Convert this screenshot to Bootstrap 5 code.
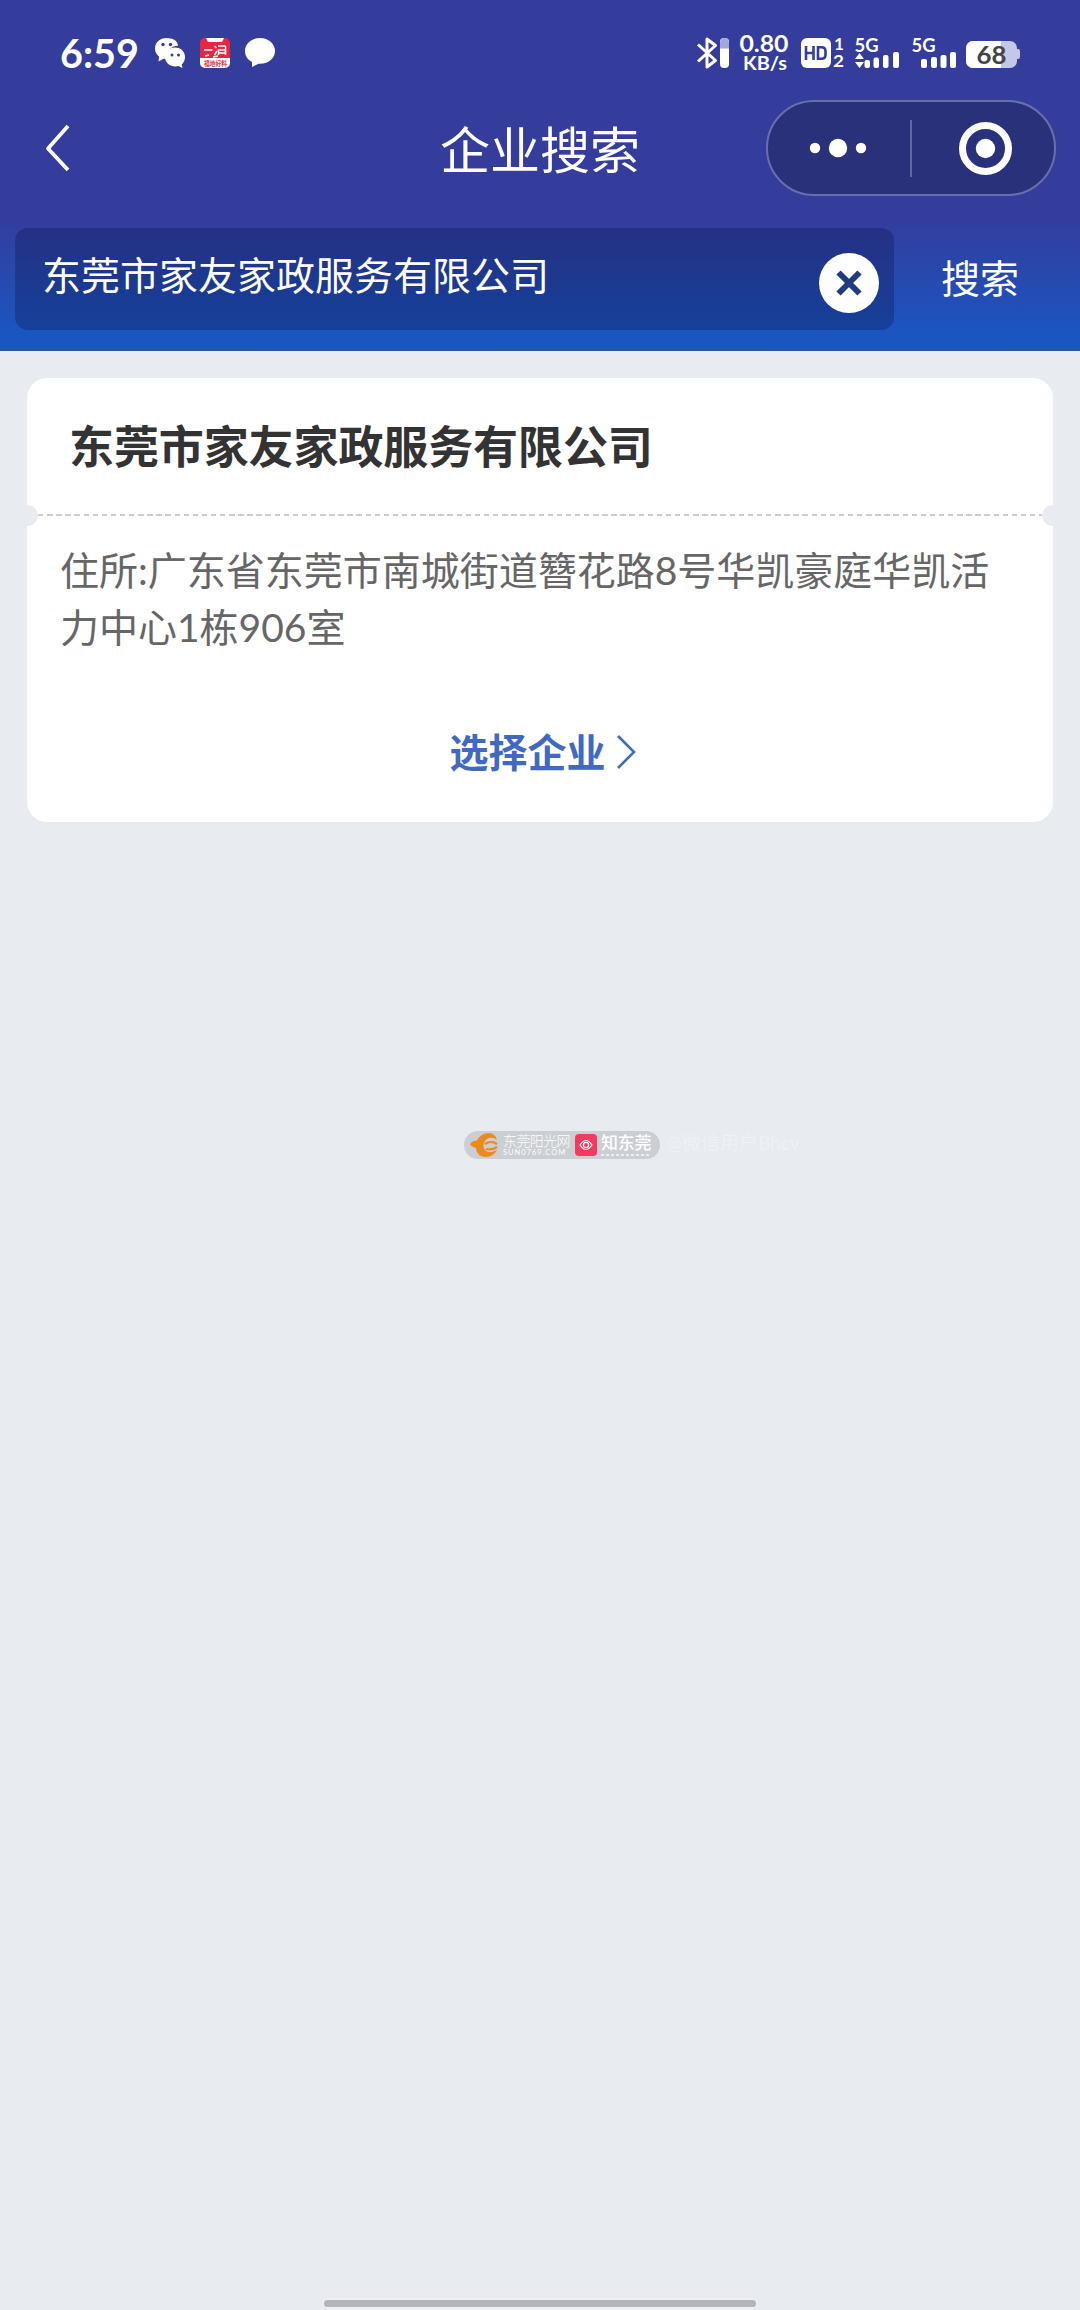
<!DOCTYPE html>
<html lang="zh-CN">
<head>
<meta charset="utf-8">
<meta name="viewport" content="width=device-width, initial-scale=1">
<title>企业搜索</title>
<link href="https://cdn.jsdelivr.net/npm/bootstrap@5.3.0/dist/css/bootstrap.min.css" rel="stylesheet">
<style>
  body{width:1080px;height:2310px;background:#e8ebf0;font-family:Lato,"Noto Sans CJK SC",sans-serif;font-size:39px;overflow:hidden}
  svg{display:block;flex:none}
  .top-area{height:351px;background:linear-gradient(#343c9c 0,#343c9c 215px,#1957c2 342px,#1957b8 349px,#2f5596 351px);color:#fff}
  .status-bar{height:100px;padding:0 60px 0 60px}
  .clock{font-size:39.5px;font-weight:700;line-height:48px;margin-top:29px;width:95px}
  .title-bar{height:96px;padding:0 24px}
  .page-title{font-size:50px;line-height:60px;padding-top:4px}
  .back-link{padding-left:20px}
  .capsule{width:290px;height:96px;border:2px solid #6a6fac;background:#29317b}
  .search-row{margin-top:32px;padding-left:15px}
  .search-box{width:879px;height:102px;border-radius:13px;background:rgba(0,5,40,.24);padding:0 15px 0 27px}
  .search-text{line-height:58px;margin-top:-8px}
  .search-go{width:186px;line-height:58px;padding-left:47px;margin-top:-2px}
  .result{width:1026px;height:444px;margin:27px 0 0 27px;border-radius:20px}
  .result-head{height:137px;padding:0 30px 0 42px}
  .result-name{font-size:45px;font-weight:600;letter-spacing:-.1px;line-height:60px;color:#333;margin:0}
  .tear{height:0;margin:0 -10px}
  .tear i{width:21px;height:21px;border-radius:50%;background:#e8ebf0;flex:none}
  .dashes{height:2px;background:repeating-linear-gradient(90deg,#cbcdce 0 5.4px,transparent 5.4px 9.1px)}
  .address{padding:27px 56px 0 33px;line-height:57px;color:#666;height:209px}
  .pick{color:#4169c1;font-weight:700;line-height:56px;padding-left:7px}
  .watermark{margin:309px 0 0 464px;height:28px}
  .wm-pill{width:196px;height:28px;background:#cbced3;color:#fff;padding-left:5px}
  .wm-site{width:68px}
  .wm-name{font-size:14px;line-height:16px;font-weight:300;letter-spacing:-.6px}
  .wm-know{font-size:17px;line-height:17px;font-weight:500;letter-spacing:-.3px}
  .wm-sub{font-size:7.5px;line-height:8px;letter-spacing:1px}
  .wm-line{height:2px;width:49px;margin-top:3px;background:repeating-linear-gradient(90deg,#eceef0 0 3px,transparent 3px 5px)}
  .wm-user{font-size:19px;color:#eff1f5;line-height:24px;margin:-4px 0 0 6px}
  .home-bar{width:432px;height:7px;background:#b4b5ba;margin:1141px auto 0;box-shadow:0 0 0 2px #edeef2}
</style>
</head>
<body>
<div class="d-flex flex-column">
  <header class="top-area">
    <div class="status-bar d-flex">
      <div class="clock">6:59</div>
      <svg width="125" height="100" viewBox="155 0 125 100">
        <path fill="#fff" d="M166.500 38c-6.500 0-11.500 4.500-11.500 10.500 0 3.500 1.500 6 4 8l-.5 5 5-2.800h2.500a12 12 0 0 1 12-13c0-5-5.500-7.700-11.500-7.700z"/>
        <path fill="#fff" d="M175 47.500c-6 0-10 4.200-10 9.500s4.500 9.500 10.500 9.500l3-.5 4 2-.8-3.500c2-1.800 3.300-4.500 3.300-7.500 0-5.300-4-9.500-10-9.500z"/>
        <g fill="#343c9c"><circle cx="163" cy="44.500" r="1.700"/><circle cx="170.500" cy="44.500" r="1.700"/><circle cx="172" cy="55" r="1.500"/><circle cx="178.500" cy="55" r="1.500"/></g>
        <rect x="200" y="38" width="30" height="30" rx="5" fill="#e62742"/>
        <path fill="#fff" d="M200 58h30v5a5 5 0 0 1-5 5h-20a5 5 0 0 1-5-5zM206 38h18l-2 4h-14z"/>
        <path d="M204 50h8.500M214.500 46l2 2M214.500 55l2.500-4M218 46h7.500M218.500 49.500v5.500M218.500 50h7M218.500 53h7M225.500 46v9M205 56l4-1M213 57l5-1" stroke="#fff" stroke-width="1.500" fill="none"/>
        <text x="204" y="66" font-size="6.500" textLength="23" lengthAdjust="spacingAndGlyphs" fill="#d93a50" font-weight="700">福地好料</text>
        <path fill="#fff" d="M260 38c-8.500 0-15 5.800-15 13 0 5 2.500 8.500 7 11l0 5 6.500-3.200c9 .6 16.500-5 16.500-12.800 0-7.200-6.500-13-15-13z"/>
      </svg>
      <svg class="ms-auto" width="325" height="100" viewBox="695 0 325 100" font-family="Lato" font-weight="700">
        <path d="M698 44.500l17.500 16-8.500 6.500v-28l8.500 6.500-17.500 16" fill="none" stroke="#fff" stroke-width="3" stroke-linejoin="round"/>
        <rect x="720" y="38" width="9" height="30" rx="4" fill="#fff"/><path d="M720 48.500v-6a4.500 4.500 0 0 1 9 0v6z" fill="#a3a7d8"/>
        <g fill="#fff"><text x="739.500" y="52" font-size="22.500" textLength="49" lengthAdjust="spacingAndGlyphs">0.80</text><text x="743" y="70" font-size="19" textLength="44" lengthAdjust="spacingAndGlyphs">KB/s</text>
        <rect x="801" y="38" width="30" height="30" rx="6"/>
        <text x="834" y="50" font-size="17">1</text><text x="833" y="67" font-size="17" textLength="11" lengthAdjust="spacingAndGlyphs">2</text>
        <text x="854.500" y="52" font-size="19.500" textLength="24" lengthAdjust="spacingAndGlyphs">5G</text><text x="911.500" y="52" font-size="19.500" textLength="24" lengthAdjust="spacingAndGlyphs">5G</text>
        <path d="M859.500 53l4.500 6h-9zM859.500 68l4.500-6h-9z"/>
        <rect x="864.500" y="60" width="5.500" height="8" rx="2"/><rect x="873.500" y="57.500" width="5.500" height="10.500" rx="2"/><rect x="883" y="55" width="5.500" height="13" rx="2"/><rect x="893" y="52" width="6" height="16" rx="2"/>
        <rect x="921" y="59" width="6" height="9" rx="2"/><rect x="931" y="57" width="6" height="11" rx="2"/><rect x="940.500" y="55" width="6" height="13" rx="2"/><rect x="950" y="52" width="6" height="16" rx="2"/></g>
        <path d="M806 46v14M813.500 46v14M806 53h7.500M818 47.200h3.500q4 0 4 4v3.600q0 4-4 4H818z" fill="none" stroke="#343c9c" stroke-width="2.600"/>
        <rect x="966" y="41" width="51" height="27" rx="7" fill="#c4c7e9"/><path d="M1017 49h1a2 2 0 0 1 2 2v6a2 2 0 0 1-2 2h-1z" fill="#c4c7e9"/>
        <path d="M1001 41v27h-28a7 7 0 0 1-7-7V48a7 7 0 0 1 7-7z" fill="#fff"/>
        <text x="976.500" y="63.500" font-size="25" textLength="30" lengthAdjust="spacingAndGlyphs" fill="#444">68</text>
      </svg>
    </div>
    <nav class="title-bar row g-0 align-items-center">
      <div class="col-4 back-link"><svg width="30" height="50" viewBox="0 0 30 50"><path d="M24 3L4 25.500 24 47" fill="none" stroke="#fff" stroke-width="3.800" stroke-linejoin="round"/></svg></div>
      <div class="col-4 page-title text-center text-nowrap">企业搜索</div>
      <div class="col-4 d-flex justify-content-end">
        <div class="capsule rounded-pill"><svg width="286" height="92" viewBox="768 102 286 92"><g fill="#fff"><circle cx="815" cy="148" r="5.200"/><circle cx="838" cy="148" r="9.200"/><circle cx="861" cy="148" r="5.200"/><circle cx="985.500" cy="148.500" r="9.700"/></g><circle cx="985.500" cy="148.500" r="23" fill="none" stroke="#fff" stroke-width="7"/><path d="M911 120v57" stroke="#62679f" stroke-width="2"/></svg></div>
      </div>
    </nav>
    <div class="search-row d-flex align-items-center">
      <div class="search-box d-flex align-items-center justify-content-between">
        <span class="search-text">东莞市家友家政服务有限公司</span>
        <svg width="60" height="60" viewBox="0 0 60 60" class="mt-2"><circle cx="30" cy="30" r="30" fill="#fff"/><path d="M19.500 19.500l21 21m0-21l-21 21" stroke="#203c80" stroke-width="6"/></svg>
      </div>
      <span class="search-go">搜索</span>
    </div>
  </header>
  <main>
    <section class="result card border-0 overflow-hidden">
      <div class="result-head d-flex align-items-center"><h1 class="result-name">东莞市家友家政服务有限公司</h1></div>
      <div class="tear d-flex align-items-center"><i></i><div class="dashes flex-grow-1"></div><i></i></div>
      <div class="address">住所:广东省东莞市南城街道簪花路8号华凯豪庭华凯活力中心1栋906室</div>
      <div class="pick d-flex align-items-center justify-content-center"><span>选择企业</span><svg class="ms-2" width="24" height="40" viewBox="0 0 24 40"><path d="M4 4l16 16L4 36" fill="none" stroke="#4169c1" stroke-width="2.600"/></svg></div>
    </section>
    <div class="watermark d-flex align-items-center">
      <div class="wm-pill rounded-pill d-flex align-items-center">
        <svg width="30" height="26" viewBox="0 0 30 26"><path fill="#ee8a1d" d="M1 12.500c1-3 4-4 7-4C10 4 15 1 20 1c4 0 7 3 8 7-4-3-9-3-12 1-2 3-2 7 1 10 3 2 7 1 11-1-2 4-6 7-11 7-6 0-10-4-10-9-2-1-4-1-6-3.500z"/><path d="M16 12c4-3 9-2 12 0M17 17c4 1 8 0 11-2" fill="none" stroke="#ee8a1d" stroke-width="2.200"/></svg>
        <div class="wm-site ms-1"><div class="wm-name text-nowrap">东莞阳光网</div><div class="wm-sub text-nowrap">SUN0769.COM</div></div>
        <svg width="22" height="22" viewBox="0 0 22 22" class="ms-1"><rect width="22" height="22" rx="4" fill="#f5395f"/><path d="M5 11q6-9 12 0q-6 9-12 0z" fill="none" stroke="#fff" stroke-width="1.200"/><circle cx="11" cy="11" r="2.600" fill="none" stroke="#fff" stroke-width="1.300"/></svg>
        <div class="ms-1"><div class="wm-know text-nowrap">知东莞</div><div class="wm-line"></div></div>
      </div>
      <div class="wm-user text-nowrap">@微信用户Bhcv</div>
    </div>
    <div class="home-bar rounded-pill"></div>
  </main>
</div>
<script src="https://cdn.jsdelivr.net/npm/bootstrap@5.3.0/dist/js/bootstrap.bundle.min.js"></script>
</body>
</html>
